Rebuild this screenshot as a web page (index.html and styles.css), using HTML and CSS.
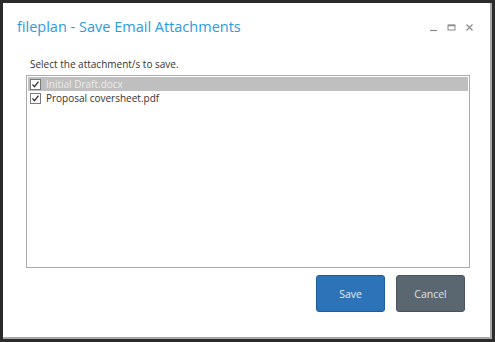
FILE: index.html
```html
<!DOCTYPE html>
<html lang="en">
<head>
    <meta charset="UTF-8">
    <meta name="viewport" content="width=device-width, initial-scale=1.0">
    <title>Save Email Attachments</title>
    <link rel="stylesheet" href="styles.css">
</head>
<body>
    <div class="window">
        <div class="titlebar">
            <h1 class="title">fileplan - Save Email Attachments</h1>
            <div class="controls">
                <svg width="9" height="9" viewBox="0 0 9 9"><path d="M1 7.5h7" stroke="#8a8a8a" stroke-width="1.2"/></svg>
                <svg width="9" height="9" viewBox="0 0 9 9"><rect x="1" y="2" width="7" height="5" fill="none" stroke="#8a8a8a"/><path d="M1 2.5h7" stroke="#8a8a8a" stroke-width="1.5"/></svg>
                <svg width="9" height="9" viewBox="0 0 9 9"><path d="M1.5 1.5l6 6M7.5 1.5l-6 6" stroke="#8a8a8a" stroke-width="1.2"/></svg>
            </div>
        </div>

        <div class="content">
            <p class="prompt">Select the attachment/s to save.</p>
            <div class="list">
                <label class="item selected">
                    <span class="check"><svg width="9" height="9" viewBox="0 0 9 9"><path d="M1.5 4.5l2 2.2 4-5" fill="none" stroke="#333" stroke-width="1.3"/></svg></span>
                    Initial Draft.docx
                </label>
                <label class="item">
                    <span class="check"><svg width="9" height="9" viewBox="0 0 9 9"><path d="M1.5 4.5l2 2.2 4-5" fill="none" stroke="#333" stroke-width="1.3"/></svg></span>
                    Proposal coversheet.pdf
                </label>
            </div>
            <div class="actions">
                <button type="button" class="btn save">Save</button>
                <button type="button" class="btn cancel">Cancel</button>
            </div>
        </div>
    </div>
</body>
</html>
```
FILE: styles.css
```css
html, body {
    margin: 0;
    padding: 0;
    height: 100%;
    background-color: #2b2b2b;
}
body {
    font-family: "Open Sans", "Noto Sans", sans-serif;
    padding: 3px;
    box-sizing: border-box;
}
.window {
    background: #fff;
    height: 100%;
    box-sizing: border-box;
    border-right: 2px solid #a8a8a8;
    border-bottom: 2px solid #a8a8a8;
}
.titlebar {
    display: flex;
    align-items: center;
    justify-content: space-between;
    padding: 8px 16px 0 14px;
    height: 30px;
}
.title {
    margin: 0;
    font-size: 14.5px;
    font-weight: normal;
    color: #2a9be0;
}
.controls {
    display: flex;
    gap: 9px;
    padding-top: 2px;
}
.content {
    padding: 16px 20px 0 23px;
}
.prompt {
    margin: 0 0 4px 4px;
    font-size: 10px;
    line-height: 14px;
    color: #333;
}
.list {
    height: 193px;
    box-sizing: border-box;
    border: 1px solid #ababab;
    padding: 1px;
}
.item {
    display: flex;
    align-items: center;
    height: 14px;
    font-size: 10px;
    color: #333;
    padding-left: 2px;
}
.item.selected {
    background-color: #bfbfbf;
    color: #ececec;
}
.check {
    display: flex;
    align-items: center;
    justify-content: center;
    width: 9px;
    height: 9px;
    margin-right: 5px;
    border: 1px solid #7a7a7a;
    background: #fff;
}
.actions {
    display: flex;
    justify-content: flex-end;
    gap: 11px;
    padding: 7px 5px 0 0;
}
.btn {
    width: 69px;
    height: 37px;
    border: 1px solid #1f5d99;
    border-radius: 3px;
    color: #e6eef6;
    font-family: inherit;
    font-size: 10.5px;
    cursor: pointer;
}
.save {
    background-color: #2d73b8;
}
.cancel {
    background-color: #5b6770;
    border-color: #48535b;
    color: #dde2e5;
}
```
